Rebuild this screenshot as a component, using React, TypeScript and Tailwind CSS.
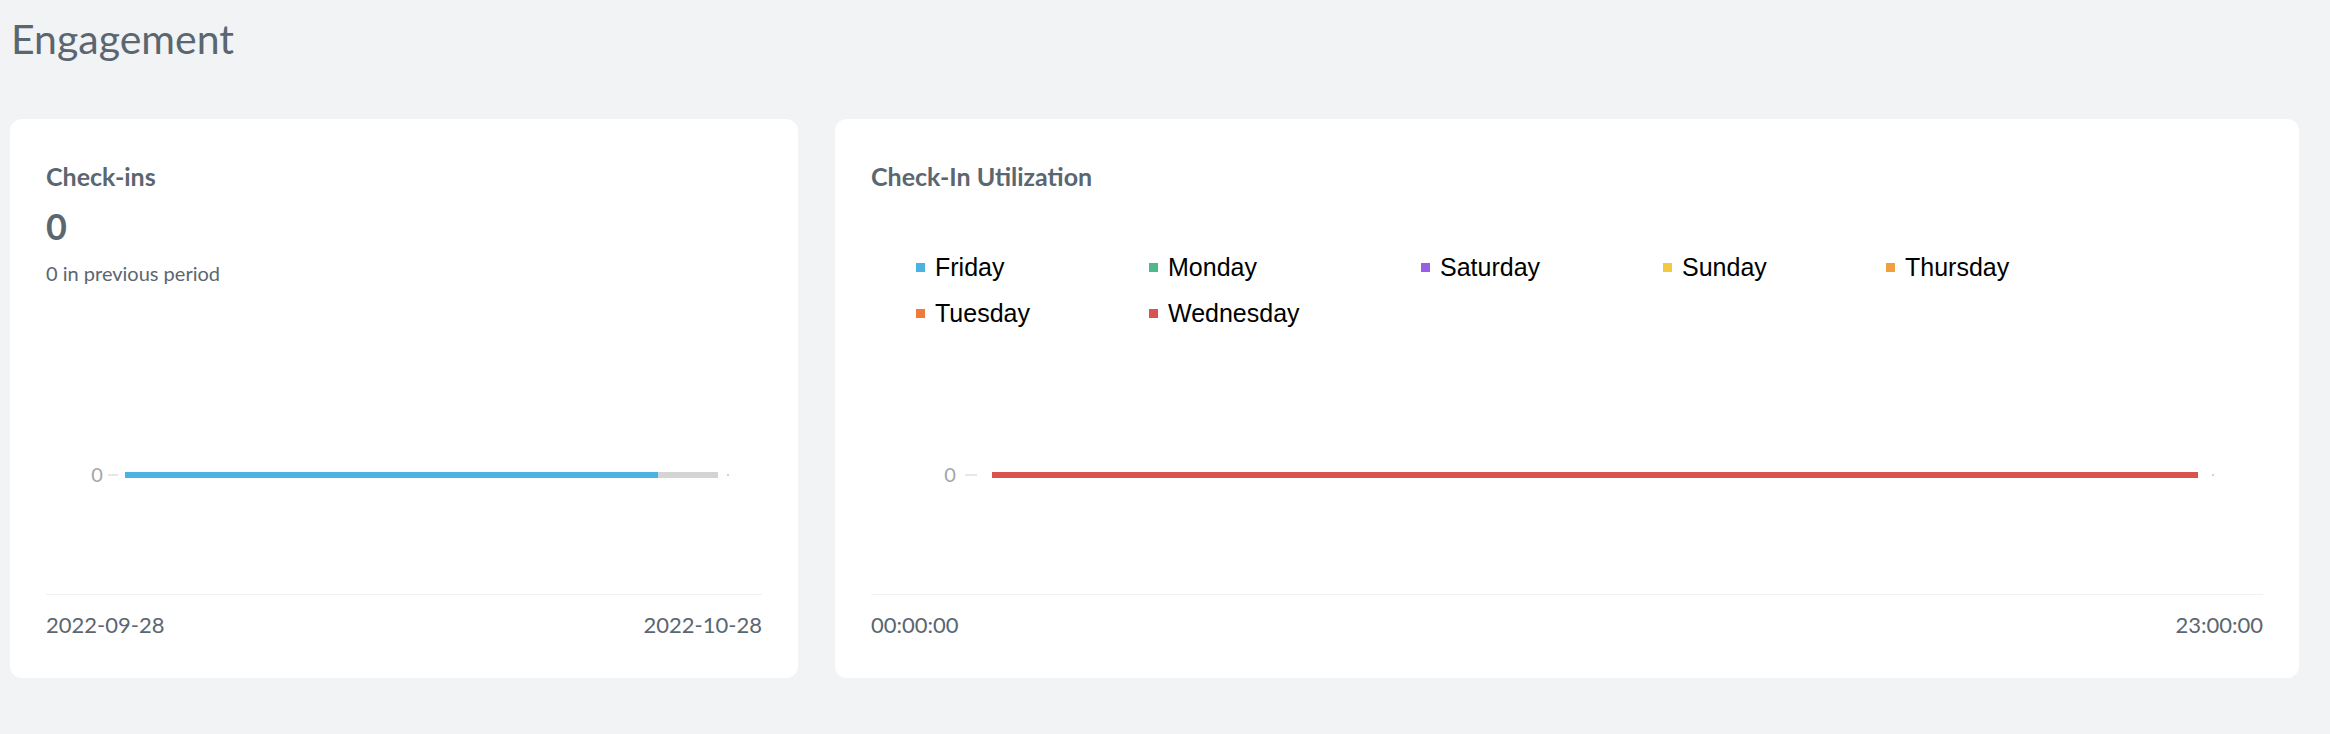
const font = { fontFamily: "Lato, 'Open Sans', sans-serif" }

const legend = [
  [
    { name: "Friday", color: "bg-[#4ab3e2]", w: "w-[233px]" },
    { name: "Monday", color: "bg-[#4db88a]", w: "w-[272px]" },
    { name: "Saturday", color: "bg-[#9b5de5]", w: "w-[242px]" },
    { name: "Sunday", color: "bg-[#f5c842]", w: "w-[223px]" },
    { name: "Thursday", color: "bg-[#f0a03c]", w: "w-[200px]" },
  ],
  [
    { name: "Tuesday", color: "bg-[#ef7b3a]", w: "w-[233px]" },
    { name: "Wednesday", color: "bg-[#d9534f]", w: "w-[272px]" },
  ],
]

const App = () => {
  return (
    <div className="w-[2330px] h-[734px] bg-[#f1f3f5] text-[#5a6670] overflow-hidden" style={font}>
      <h1 className="pl-[11px] pt-[13px] text-[41px] leading-[52px] font-normal">Engagement</h1>
      <div className="flex gap-[37px] pl-[10px] mt-[54px]">
        <div className="w-[788px] h-[559px] bg-white rounded-[12px] flex flex-col px-[36px] pt-[42px]">
          <div className="text-[25px] leading-[30px] font-bold">Check-ins</div>
          <div className="mt-[13px] text-[36px] leading-[44px] font-bold">0</div>
          <div className="mt-[12px] text-[20px] leading-[26px]">0 in previous period</div>
          <svg width="716" height="308" className="block">
            <text x="51" y="196" fontSize="20" fill="#a0a6ab" textAnchor="middle" style={font}>0</text>
            <line x1="62" y1="189" x2="72" y2="189" stroke="#e5e7eb" strokeWidth="2" />
            <line x1="79" y1="189" x2="672" y2="189" stroke="#d4d4d4" strokeWidth="6" />
            <line x1="79" y1="189" x2="612" y2="189" stroke="#4ab3e2" strokeWidth="6" />
            <circle cx="682" cy="189" r="1.2" fill="#d4d4d4" />
          </svg>
          <div className="border-t border-[#f0f1f3] pt-[16px] flex justify-between text-[22px] leading-[28px]">
            <span>2022-09-28</span>
            <span>2022-10-28</span>
          </div>
        </div>
        <div className="w-[1464px] h-[559px] bg-white rounded-[12px] flex flex-col px-[36px] pt-[42px]">
          <div className="text-[25px] leading-[30px] font-bold">Check-In Utilization</div>
          <div className="mt-[61px] flex flex-col gap-[16px] pl-[45px] text-black text-[25px] leading-[30px]" style={{ fontFamily: "'Liberation Sans', Arial, sans-serif" }}>
            {legend.map((row, i) => (
              <div key={i} className="flex">
                {row.map((it) => (
                  <div key={it.name} className={`${it.w} flex items-center gap-[10px]`}>
                    <span className={`w-[9px] h-[9px] ${it.color}`} />
                    <span>{it.name}</span>
                  </div>
                ))}
              </div>
            ))}
          </div>
          <svg width="1392" height="266" className="block">
            <text x="79" y="154" fontSize="20" fill="#a0a6ab" textAnchor="middle" style={font}>0</text>
            <line x1="94" y1="147" x2="106" y2="147" stroke="#e5e7eb" strokeWidth="2" />
            <line x1="121" y1="147" x2="1327" y2="147" stroke="#d9534f" strokeWidth="6" />
            <circle cx="1342" cy="147" r="1.2" fill="#d4d4d4" />
          </svg>
          <div className="border-t border-[#f0f1f3] pt-[16px] flex justify-between text-[22px] leading-[28px]">
            <span>00:00:00</span>
            <span>23:00:00</span>
          </div>
        </div>
      </div>
    </div>
  )
}

export default App
